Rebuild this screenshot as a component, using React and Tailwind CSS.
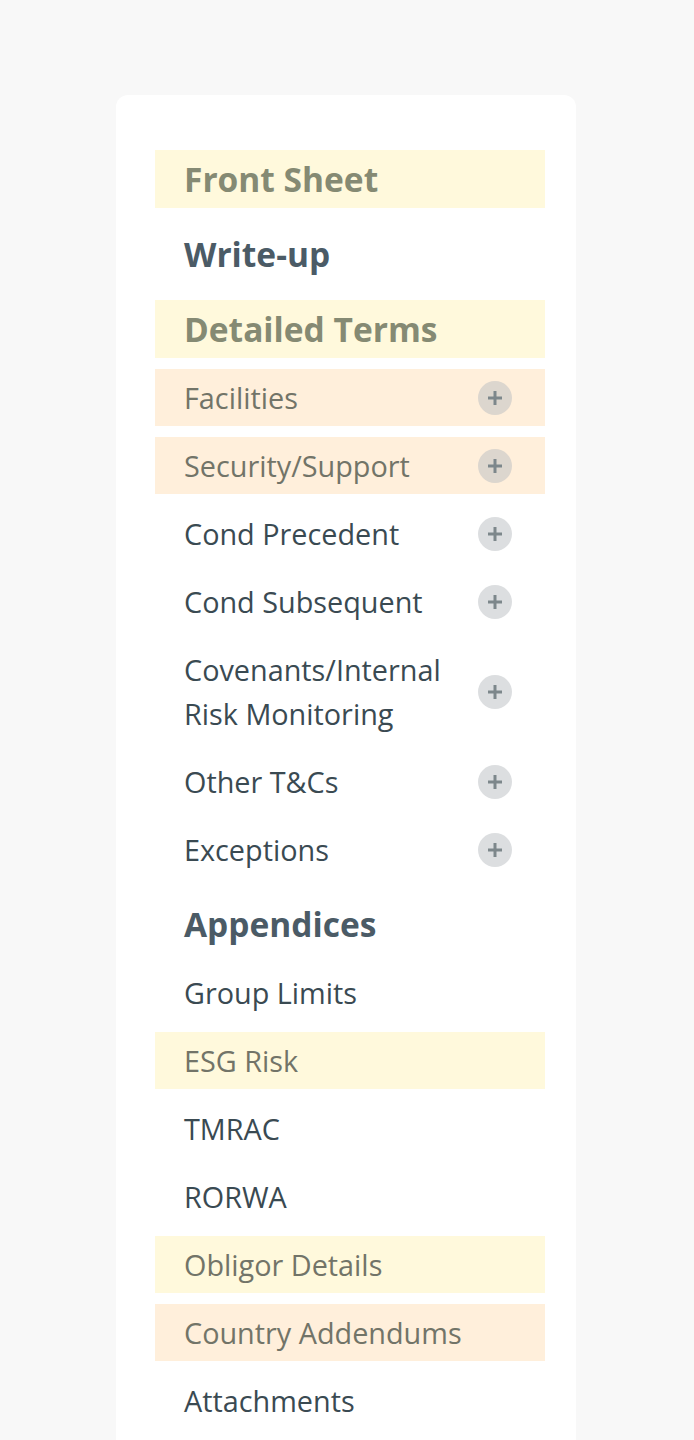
const items = [
  { label: 'Front Sheet', type: 'header', tone: 'yellow' },
  { label: 'Write-up', type: 'header' },
  { label: 'Detailed Terms', type: 'header', tone: 'yellow' },
  { label: 'Facilities', tone: 'orange', expand: true },
  { label: 'Security/Support', tone: 'orange', expand: true },
  { label: 'Cond Precedent', expand: true },
  { label: 'Cond Subsequent', expand: true },
  { label: ['Covenants/Internal', 'Risk Monitoring'], expand: true },
  { label: 'Other T&Cs', expand: true },
  { label: 'Exceptions', expand: true },
  { label: 'Appendices', type: 'header' },
  { label: 'Group Limits' },
  { label: 'ESG Risk', tone: 'yellow' },
  { label: 'TMRAC' },
  { label: 'RORWA' },
  { label: 'Obligor Details', tone: 'yellow' },
  { label: 'Country Addendums', tone: 'orange' },
  { label: 'Attachments' }
]

function PlusButton() {
  return (
    <span className="flex h-[34px] w-[34px] shrink-0 items-center justify-center rounded-full bg-[#b9bec2]/50">
      <svg width="16" height="16" viewBox="0 0 16 16">
        <path d="M8 1v14M1 8h14" stroke="#7d878b" strokeWidth="3" />
      </svg>
    </span>
  )
}

function NavRow({ item, index }) {
  const isHeader = item.type === 'header'
  const bg =
    item.tone === 'yellow'
      ? 'bg-[#fff9dc]'
      : item.tone === 'orange'
        ? 'bg-[#ffefdb]'
        : 'bg-white'
  let color
  if (isHeader) color = item.tone ? 'text-[#858a73]' : 'text-[#4b5b66]'
  else color = item.tone ? 'text-[#727468]' : 'text-[#3a4a52]'

  const lines = Array.isArray(item.label) ? item.label : [item.label]

  return (
    <div
      className={`flex items-center justify-between pl-[29px] pr-[33px] leading-[44px] ${bg} ${
        isHeader
          ? `py-[7px] text-[33.5px] font-bold ${index > 0 ? 'mt-[6px]' : ''}`
          : 'py-[6.5px] text-[28.8px]'
      }`}
    >
      <span className={color}>
        {lines.map((l) => (
          <span key={l} className="block">
            {l}
          </span>
        ))}
      </span>
      {item.expand && <PlusButton />}
    </div>
  )
}

export default function App() {
  return (
    <div
      className="min-h-[1440px] bg-[#f8f8f8] pt-[95px] pl-[116px]"
      style={{ fontFamily: '"Open Sans", "Noto Sans", sans-serif' }}
    >
      <div className="w-[460px] rounded-t-[12px] bg-white pt-[55px] pb-[40px] pl-[39px] pr-[31px]">
        <div className="flex flex-col gap-[11px]">
          {items.map((item, i) => (
            <NavRow key={i} item={item} index={i} />
          ))}
        </div>
      </div>
    </div>
  )
}
